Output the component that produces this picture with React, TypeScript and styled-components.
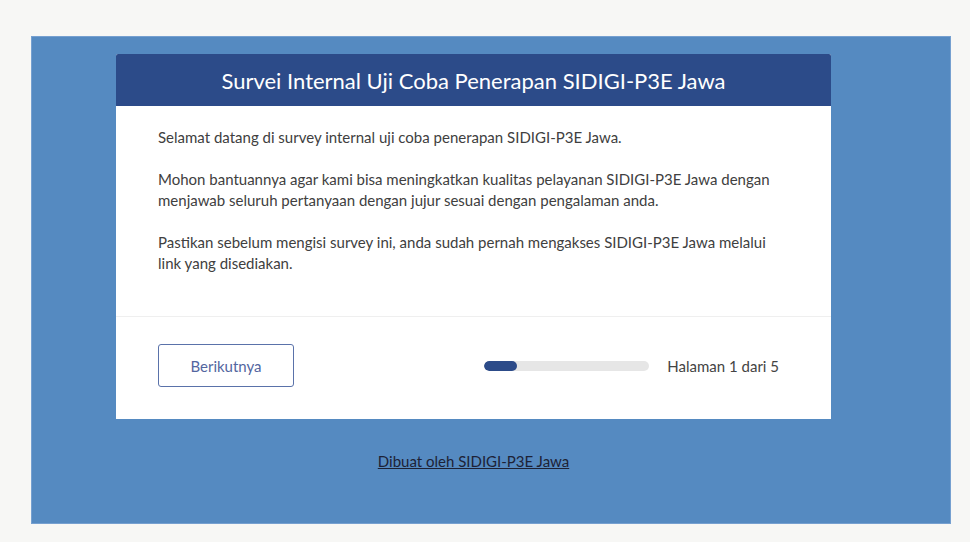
import React from "react";
import styled, { createGlobalStyle } from "styled-components";

const GlobalStyle = createGlobalStyle`
  html, body {
    margin: 0;
    padding: 0;
    background: #f7f7f5;
  }
  body {
    font-family: Lato, "Noto Sans", sans-serif;
  }
`;

const Page = styled.div`
  padding: 36px 19px 18px 31px;
  box-sizing: border-box;
  width: 970px;
  height: 542px;
`;

const Backdrop = styled.div`
  background: #558ac1;
  border: 1px solid #76a0d0;
  box-sizing: border-box;
  height: 488px;
  padding: 17px 0 0 84px;
`;

const Card = styled.div`
  width: 715px;
  background: #fff;
  border-radius: 2px 2px 0 0;
  overflow: hidden;
`;

const Header = styled.div`
  background: #2c4b89;
  height: 52px;
  display: flex;
  align-items: center;
  justify-content: center;
  color: #fff;
  font-size: 22px;
`;

const Body = styled.div`
  padding: 21px 42px 42px;
  border-bottom: 1px solid #efefef;
  color: #404040;
  font-size: 15px;
  line-height: 21px;
`;

const Paragraph = styled.p`
  margin: 0 0 21px;
  &:last-child {
    margin-bottom: 0;
  }
`;

const Footer = styled.div`
  display: flex;
  align-items: center;
  padding: 27px 52px 32px 42px;
`;

const NextButton = styled.button`
  width: 136px;
  height: 43px;
  background: #fff;
  border: 1px solid #5a72aa;
  border-radius: 3px;
  color: #5366a0;
  font-family: inherit;
  font-size: 15px;
  cursor: pointer;
`;

const Progress = styled.div`
  margin-left: auto;
  display: flex;
  align-items: center;
  gap: 18px;
`;

const Track = styled.div`
  width: 165px;
  height: 10px;
  border-radius: 5px;
  background: #e6e6e6;
  overflow: hidden;
`;

const Fill = styled.div`
  height: 100%;
  background: #2c4b89;
  border-radius: 5px;
`;

const PageLabel = styled.span`
  color: #444;
  font-size: 15px;
`;

const Credit = styled.div`
  text-align: center;
  width: 715px;
  margin-top: 32px;
`;

const CreditLink = styled.a`
  color: #1d2236;
  font-size: 15px;
  text-decoration: underline;
`;

export default function App() {
  const page = 1;
  const total = 5;
  return (
    <>
      <GlobalStyle />
      <Page>
        <Backdrop>
          <Card>
            <Header>Survei Internal Uji Coba Penerapan SIDIGI-P3E Jawa</Header>
            <Body>
              <Paragraph>
                Selamat datang di survey internal uji coba penerapan SIDIGI-P3E Jawa.
              </Paragraph>
              <Paragraph>
                Mohon bantuannya agar kami bisa meningkatkan kualitas pelayanan SIDIGI-P3E Jawa dengan
                menjawab seluruh pertanyaan dengan jujur sesuai dengan pengalaman anda.
              </Paragraph>
              <Paragraph>
                Pastikan sebelum mengisi survey ini, anda sudah pernah mengakses SIDIGI-P3E Jawa melalui
                link yang disediakan.
              </Paragraph>
            </Body>
            <Footer>
              <NextButton>Berikutnya</NextButton>
              <Progress>
                <Track>
                  <Fill style={{ width: `${(page / total) * 100}%` }} />
                </Track>
                <PageLabel>
                  Halaman {page} dari {total}
                </PageLabel>
              </Progress>
            </Footer>
          </Card>
          <Credit>
            <CreditLink href="#">Dibuat oleh SIDIGI-P3E Jawa</CreditLink>
          </Credit>
        </Backdrop>
      </Page>
    </>
  );
}
